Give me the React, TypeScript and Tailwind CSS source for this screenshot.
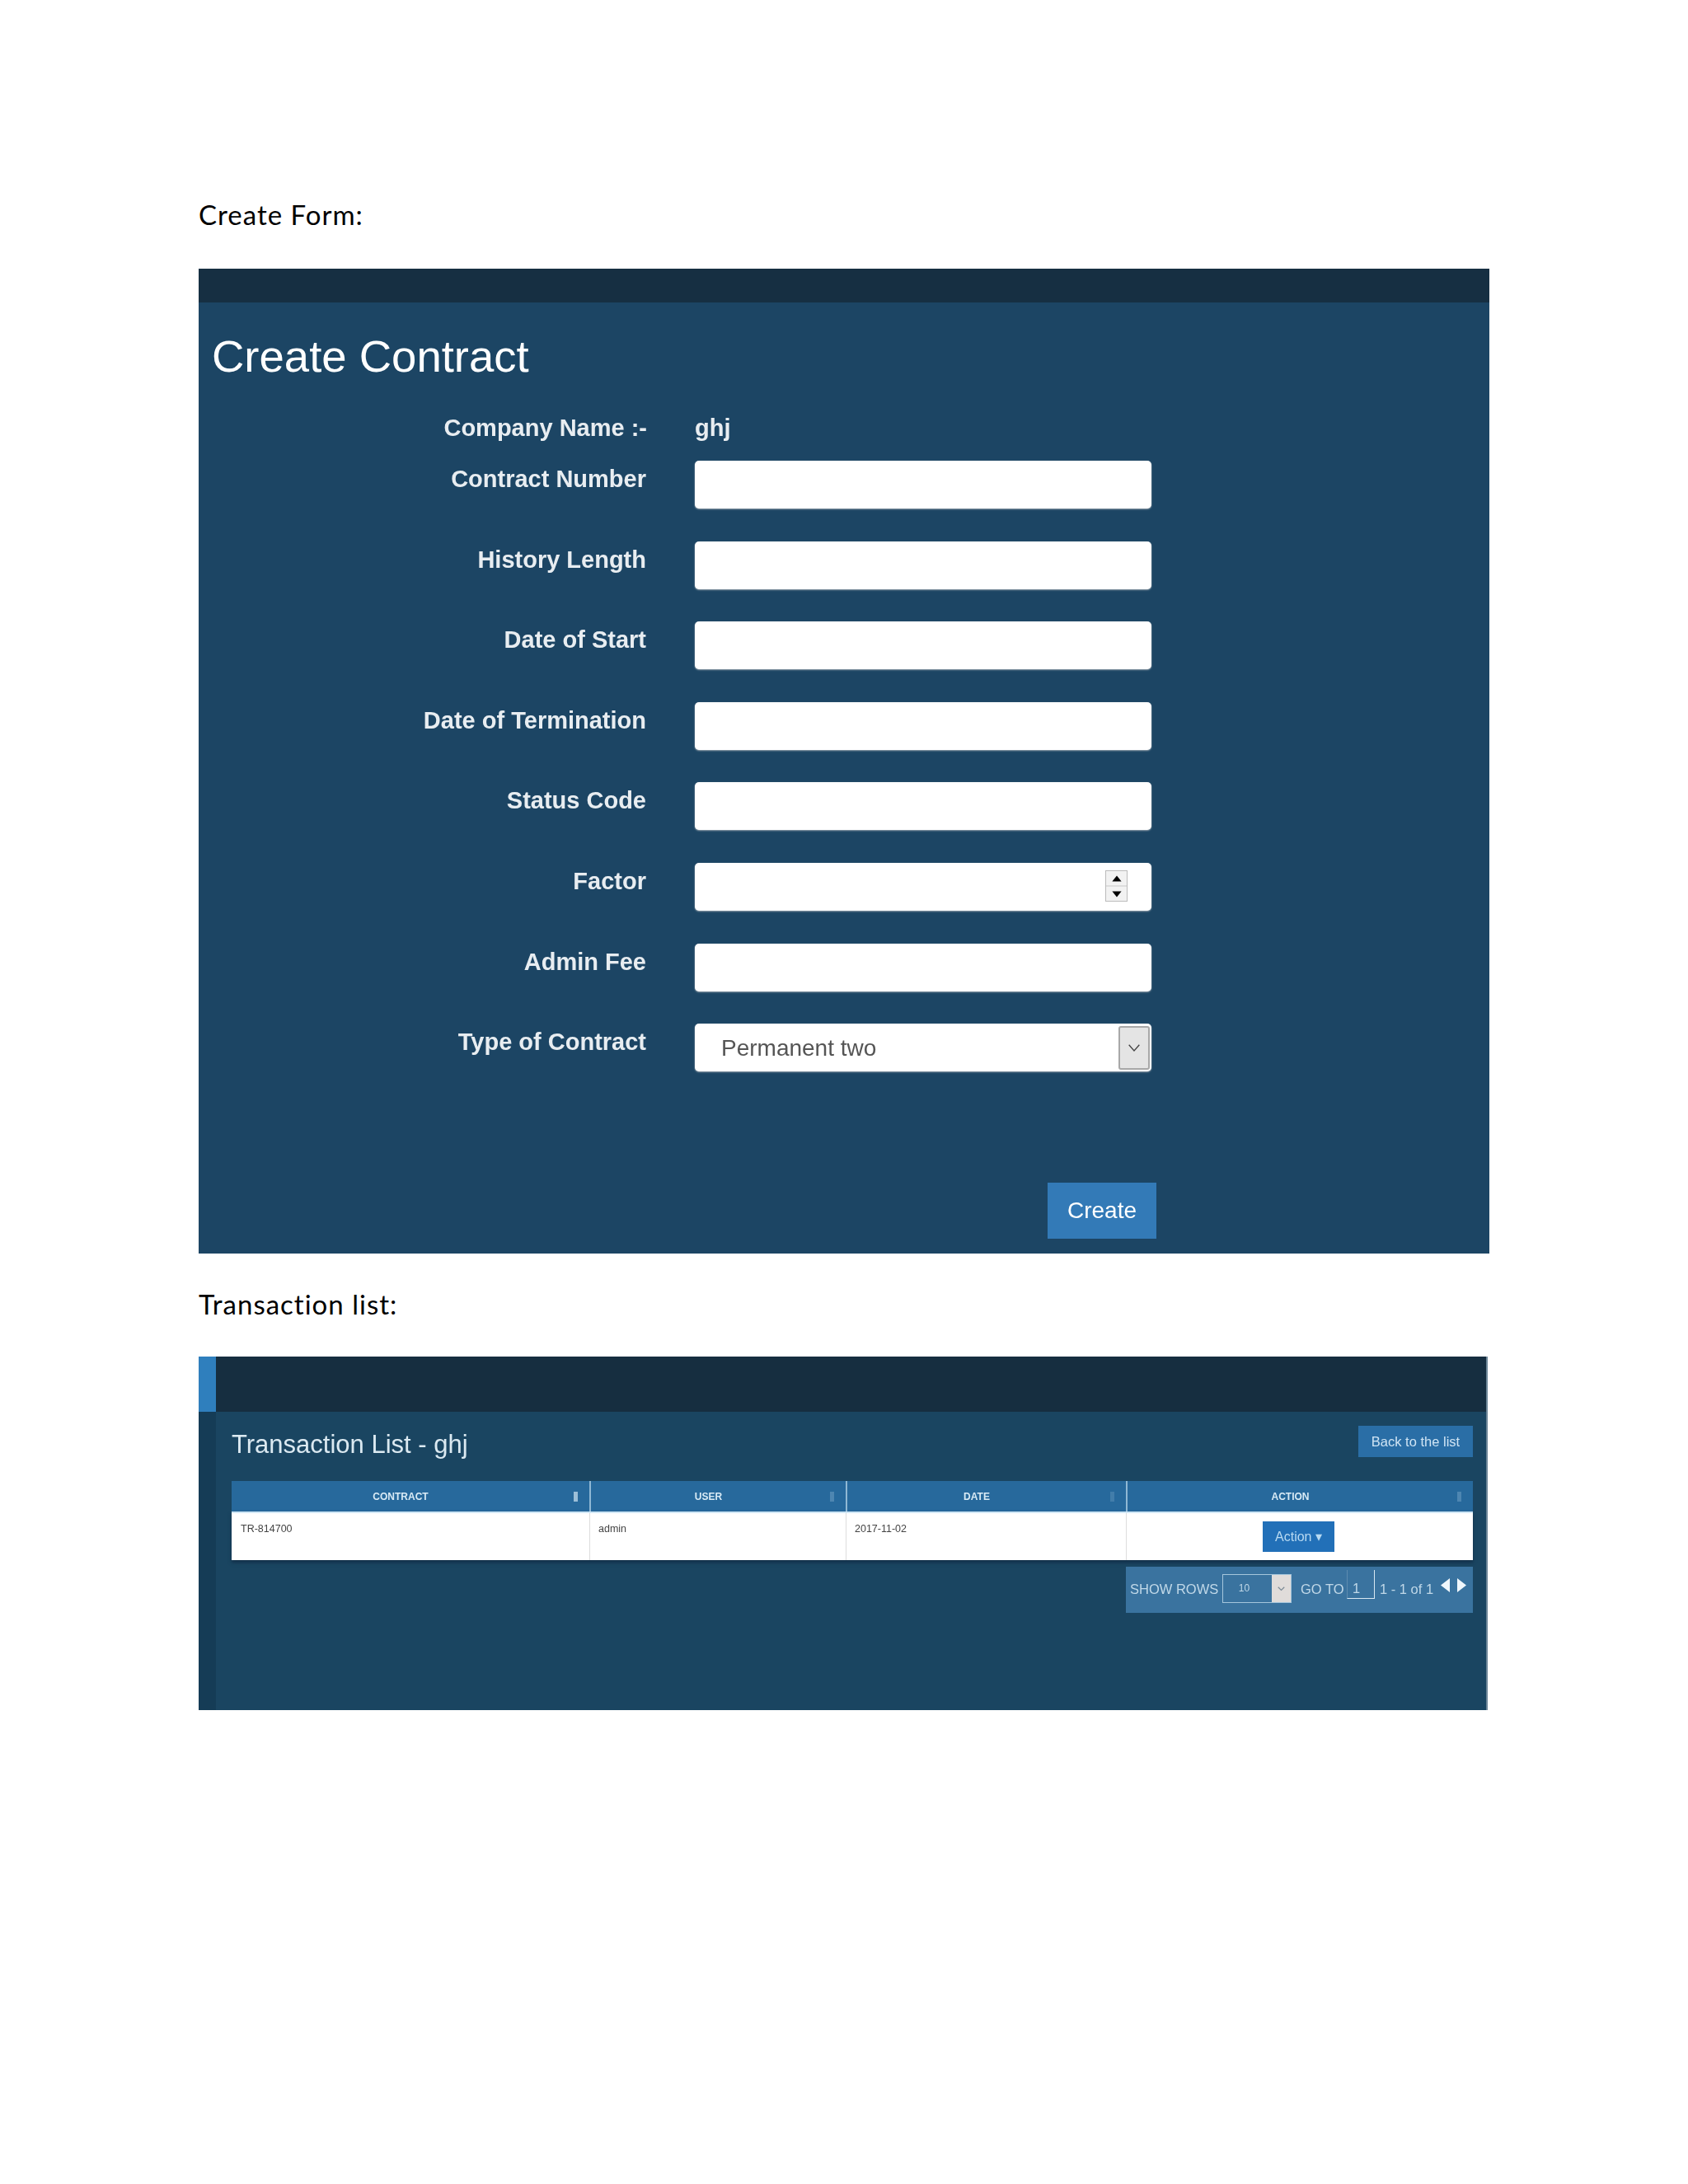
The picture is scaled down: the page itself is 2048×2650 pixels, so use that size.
export default function App() {
  const rows = ["Contract Number", "History Length", "Date of Start", "Date of Termination", "Status Code", "Factor", "Admin Fee", "Type of Contract"];
  const heads = [
    ["CONTRACT", "text-[#cfe4f2]"],
    ["USER", "text-[#5f93ba]"],
    ["DATE", "text-[#4f86b0]"],
    ["ACTION", "text-[#5f93ba]"],
  ];
  return (
    <div className="w-[2048px] h-[2650px] bg-white pt-[240px] pl-[241px] font-['Liberation_Sans',sans-serif]">
      <div className="w-[1566px]">
        <p className="font-['Lato',sans-serif] text-[33px] tracking-[1px] leading-[40px] text-black">Create Form:</p>
        <section className="mt-[46px] h-[1195px] bg-[#1c4564] blur-[0.4px]">
          <div className="h-[41px] bg-[#162f42]" />
          <h1 className="pl-[16px] pt-[35px] text-[54.5px] leading-[62px] text-white">Create Contract</h1>
          <div className="mt-[37px] flex items-center text-[29px] leading-[36px] font-bold text-[#e8edf1]">
            <span className="w-[544px] text-right">Company Name :-</span>
            <span className="ml-[58px]">ghj</span>
          </div>
          <div className="mt-[22px] flex flex-col gap-[39.6px]">
            {rows.map((r) => (
              <div key={r} className="flex items-start">
                <span className="w-[543px] pt-[4px] text-right text-[29px] leading-[36px] font-bold text-[#e8edf1]">{r}</span>
                <div className="ml-[59px] relative flex h-[58px] w-[554px] items-center rounded-[5px] bg-white shadow-[0_1px_2px_#9aa5ae] text-[#555] text-[28px]">
                  {r === "Type of Contract" && <span className="pl-[32px] pt-[2px]">Permanent two</span>}
                  {r === "Factor" && (
                    <div className="absolute right-[29px] top-[9px] flex h-[38px] w-[27px] flex-col gap-[2px] border border-[#bbb] bg-[#ddd]">
                      <div className="flex-1 bg-[#f2f2f2] flex items-center justify-center"><svg viewBox="0 0 10 7" className="w-[14px]"><path d="M5 1L9 6H1z" fill="#000" /></svg></div>
                      <div className="flex-1 bg-[#f2f2f2] flex items-center justify-center"><svg viewBox="0 0 10 7" className="w-[14px]"><path d="M5 6L9 1H1z" fill="#000" /></svg></div>
                    </div>
                  )}
                  {r === "Type of Contract" && (
                    <div className="absolute right-[2px] top-[3px] flex h-[53px] w-[38px] items-center justify-center border-2 border-[#a8a8a8] bg-[#e4e4e4] rounded-[3px]">
                      <svg viewBox="0 0 20 12" className="w-[18px]"><path d="M3 2l7 8 7-8" fill="none" stroke="#444" strokeWidth="1.5" /></svg>
                    </div>
                  )}
                </div>
              </div>
            ))}
          </div>
          <div className="mt-[135px] ml-[1030px] w-[132px] h-[68px] bg-[#337ab7] text-white text-[28px] flex items-center justify-center">Create</div>
        </section>
        <p className="mt-[41px] font-['Lato',sans-serif] text-[33px] tracking-[1px] leading-[40px] text-black">Transaction list:</p>
        <section className="mt-[44px] flex h-[429px] w-[1564px] bg-[#1a4561] border-r-2 border-[#6d8698] blur-[0.6px]">
          <div className="w-[21px] flex flex-col bg-[#153c56]"><div className="h-[67px] bg-[#2f7fbd]" /></div>
          <div className="flex-1 flex flex-col">
            <div className="h-[67px] bg-[#162e40]" />
            <div className="pl-[19px] pr-[16px] pt-[17px]">
              <div className="flex items-start justify-between">
                <h2 className="pt-[3px] text-[31px] leading-[40px] text-[#dbe9f1]">Transaction List - ghj</h2>
                <div className="w-[139px] h-[38px] bg-[#2a6ea6] text-[#cfe4f4] text-[16.5px] flex items-center justify-center">Back to the list</div>
              </div>
              <div className="mt-[24px] grid grid-cols-[434px_311px_340px_421px] h-[37px] bg-[#27699c] text-[12px] font-bold text-[#d8eaf5]">
                {heads.map(([c, ic], i) => (
                  <div key={c} className={`relative flex items-center justify-center pr-[24px] ${i ? "border-l-2 border-[#8fb8d4]" : ""}`}>
                    {c}
                    <span className={`absolute right-[14px] top-[13px] h-[12px] w-[5px] bg-current opacity-70 ${ic}`} />
                  </div>
                ))}
              </div>
              <div className="grid grid-cols-[434px_311px_340px_421px] h-[59px] bg-white border-t-2 border-[#cfe6f5] text-[#444] text-[12.5px] leading-[16px] shadow-[0_3px_4px_#12304a]">
                <div className="pl-[11px] pt-[11px]">TR-814700</div>
                <div className="pl-[10px] pt-[11px] border-l border-[#ddd]">admin</div>
                <div className="pl-[10px] pt-[11px] border-l border-[#ddd]">2017-11-02</div>
                <div className="border-l border-[#ddd] flex items-center justify-center pr-[3px]">
                  <div className="w-[87px] h-[37px] bg-[#2270b8] text-[#b8daf2] text-[16px] flex items-center justify-center">Action ▾</div>
                </div>
              </div>
              <div className="mt-[8px] ml-[1085px] w-[421px] h-[56px] bg-[#3a739f] flex items-start whitespace-nowrap text-[#c0d8e8] text-[16.5px] leading-[20px] pl-[5px]">
                <span className="mt-[17px] w-[107px]">SHOW ROWS</span>
                <div className="ml-[5px] mt-[9px] flex h-[35px] w-[84px] border border-[#a5c6dc]">
                  <span className="flex-1 text-center text-[12px] leading-[33px] pr-[8px]">10</span>
                  <div className="w-[23px] bg-[#e0dcda] flex items-center justify-center"><svg viewBox="0 0 12 8" className="w-[9px]"><path d="M1 1l5 5 5-5" fill="none" stroke="#7b8a96" strokeWidth="1.6" /></svg></div>
                </div>
                <span className="ml-[11px] mt-[17px] w-[51px]">GO TO</span>
                <div className="ml-[5px] mt-[4px] h-[35px] w-[34px] border-r border-b border-l border-[#d8e8f2] border-l-[#5d8cb0] pl-[6px] pt-[12px]">1</div>
                <span className="ml-[6px] mt-[17px] w-[62px]">1 - 1 of 1</span>
                <svg viewBox="0 0 33 17" className="ml-[11px] mt-[14px] w-[33px] h-[17px]"><path d="M12 0v17L1 8.500zM21 0v17l11-8.500z" fill="#f0f7fc" /></svg>
              </div>
            </div>
          </div>
        </section>
      </div>
    </div>
  );
}
